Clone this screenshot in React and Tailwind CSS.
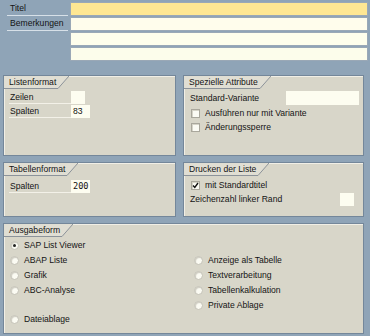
import React from 'react';

const FONT = { fontFamily: '"Liberation Sans", Arial, sans-serif' };

// Reiter oben links im Rahmen, mit schraeger Kante
const Frame = ({ title, className, children }) => (
  <div className={`border border-[#74879a] bg-[#d8d6c9] shadow-[inset_1px_1px_0_#f1efe6] ${className}`}>
    <div className="flex h-[13px]">
      <div className="bg-[#e0ded3] border-b border-[#8c939a] pl-[5px] pr-[2px] leading-[12px] whitespace-nowrap">{title}</div>
      <svg width="11" height="13" className="block">
        <polygon points="0,0 11,0 0,12.5" fill="#e0ded3" />
        <line x1="0" y1="12.5" x2="11" y2="0" stroke="#8c939a" strokeWidth="1" />
      </svg>
    </div>
    {children}
  </div>
);

const Field = ({ className, children }) => (
  <div className={`bg-[#fdfdf0] h-[13px] leading-[13px] px-[2px] text-[#111] ${className}`}>{children}</div>
);

const Label = ({ children, width = 'w-[62px]' }) => (
  <div className={`${width} h-[13px] leading-[12px] pl-[1px] border-b border-[#f3f1e8] whitespace-nowrap`}>{children}</div>
);

const Check = ({ checked }) => (
  <div className="w-[9px] h-[9px] bg-[#fbfbf4] border border-[#a9a79c] shadow-[inset_1px_1px_0_#d6d4c8] flex items-center justify-center">
    {checked && (
      <svg width="7" height="7" viewBox="0 0 7 7">
        <path d="M1 3.5 L2.8 5.5 L6 1" stroke="#111" strokeWidth="1.4" fill="none" />
      </svg>
    )}
  </div>
);

const Radio = ({ on }) => (
  <div className="w-[9px] h-[9px] rounded-full bg-[#fbfbf3] border border-[#c3c1b6] shadow-[inset_1px_1px_1px_#cfcdc2] flex items-center justify-center">
    {on && <div className="w-[3px] h-[3px] rounded-full bg-[#222]" />}
  </div>
);

const RadioRow = ({ on, children }) => (
  <div className="h-[15px] flex items-center gap-[5px]">
    <Radio on={on} />
    <span>{children}</span>
  </div>
);

export default function App() {
  return (
    <div className="w-[370px] h-[336px] bg-[#8fa4b7] text-[8.6px] text-[#141414] overflow-hidden" style={FONT}>
      {/* Kopfbereich */}
      <div className="pt-[2px] flex flex-col gap-[1px]">
        <div className="flex h-[14px]">
          <div className="w-[70px] pl-[7px] pr-[2px]">
            <div className="h-[14px] leading-[13px] pl-[3px] border-b border-[#d7e0e8]">Titel</div>
          </div>
          <div className="w-[298px] bg-[#fee793] border border-[#9aa8b6]" />
        </div>
        <div className="flex h-[14px]">
          <div className="w-[70px] pl-[7px] pr-[2px]">
            <div className="h-[14px] leading-[13px] pl-[3px] border-b border-[#d7e0e8]">Bemerkungen</div>
          </div>
          <div className="w-[298px] bg-[#fffdec] border border-[#9aa8b6]" />
        </div>
        <div className="flex h-[14px]">
          <div className="w-[70px]" />
          <div className="w-[298px] bg-[#fefeec] border border-[#9aa8b6]" />
        </div>
        <div className="flex h-[14px]">
          <div className="w-[70px]" />
          <div className="w-[298px] bg-[#fcfdeb] border border-[#9aa8b6]" />
        </div>
      </div>

      <div className="pl-[3px] mt-[14px] grid grid-cols-[173px_181px] gap-x-[7px] gap-y-[6px]">
        <Frame title="Listenformat" className="h-[81px]">
          <div className="pl-[5px] pt-[2px] flex flex-col gap-[1px]">
            <div className="flex">
              <Label>Zeilen</Label>
              <Field className="w-[14px] h-[12px]" />
            </div>
            <div className="flex">
              <Label>Spalten</Label>
              <Field className="w-[19px]">83</Field>
            </div>
          </div>
        </Frame>

        <Frame title="Spezielle Attribute" className="h-[81px]">
          <div className="pl-[6px] pt-[2px]">
            <div className="flex items-center h-[14px]">
              <div className="w-[96px] whitespace-nowrap">Standard-Variante</div>
              <Field className="w-[73px] h-[14px]" />
            </div>
            <div className="h-[14px] mt-[1px] flex items-center gap-[5px] pl-[1px]">
              <Check />
              <span>Ausführen nur mit Variante</span>
            </div>
            <div className="h-[14px] flex items-center gap-[5px] pl-[1px]">
              <Check />
              <span>Änderungssperre</span>
            </div>
          </div>
        </Frame>

        <Frame title="Tabellenformat" className="h-[55px]">
          <div className="pl-[5px] pt-[4px] flex">
            <Label>Spalten</Label>
            <Field className="w-[19px] font-mono" >
              <span style={{ fontFamily: '"DejaVu Sans Mono", monospace' }}>200</span>
            </Field>
          </div>
        </Frame>

        <Frame title="Drucken der Liste" className="h-[55px]">
          <div className="pl-[7px] pt-[2px]">
            <div className="h-[14px] flex items-center gap-[5px]">
              <Check checked />
              <span>mit Standardtitel</span>
            </div>
            <div className="h-[14px] flex items-center">
              <div className="w-[150px] whitespace-nowrap -ml-[1px]">Zeichenzahl linker Rand</div>
              <Field className="w-[14px] h-[13px]" />
            </div>
          </div>
        </Frame>

        <Frame title="Ausgabeform" className="col-span-2 h-[111px]">
          <div className="grid grid-cols-[184px_1fr] pl-[6px] pt-[1px]">
            <div>
              <RadioRow on>SAP List Viewer</RadioRow>
              <RadioRow>ABAP Liste</RadioRow>
              <RadioRow>Grafik</RadioRow>
              <RadioRow>ABC-Analyse</RadioRow>
              <div className="h-[14px]" />
              <RadioRow>Dateiablage</RadioRow>
            </div>
            <div className="pt-[15px]">
              <RadioRow>Anzeige als Tabelle</RadioRow>
              <RadioRow>Textverarbeitung</RadioRow>
              <RadioRow>Tabellenkalkulation</RadioRow>
              <RadioRow>Private Ablage</RadioRow>
            </div>
          </div>
        </Frame>
      </div>
    </div>
  );
}
